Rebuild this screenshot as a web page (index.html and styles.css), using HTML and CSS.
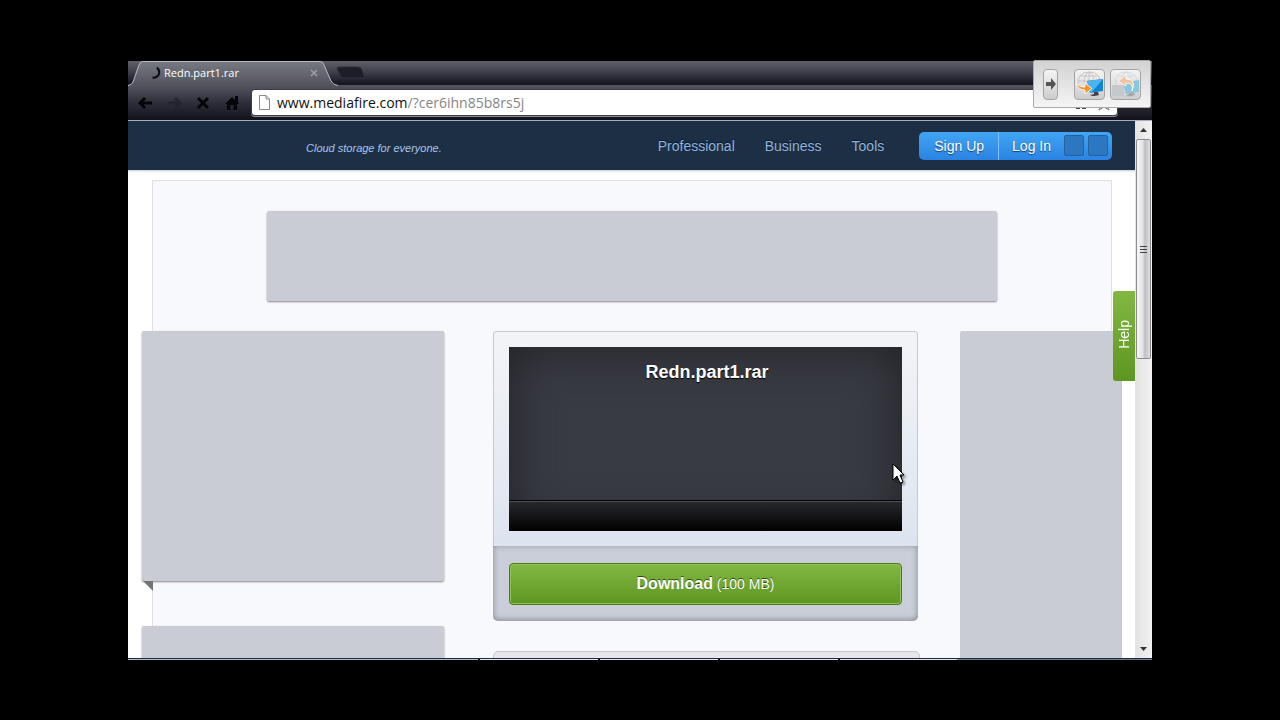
FILE: index.html
```html
<!DOCTYPE html>
<html lang="en">
<head>
<meta charset="utf-8">
<title>Redn.part1.rar</title>
<link rel="stylesheet" href="styles.css">
</head>
<body>
<div class="window">
  <div class="tab-strip">
    <div class="tab">
      <svg class="tab-shape" viewBox="0 0 212 25" aria-hidden="true">
        <defs><linearGradient id="tabFill" x1="0" y1="0" x2="0" y2="1"><stop offset="0" stop-color="#777982"/><stop offset="1" stop-color="#51525c"/></linearGradient></defs>
        <path d="M0 25 Q4 24 5 21 L11 4 Q12 1 15 1 H192 Q195 1 196 4 L203 20 Q205 24 210 25Z" fill="url(#tabFill)"/>
        <path d="M0 24.500 Q4 24 5 21 L11 4 Q12 .5 15 .5 H192 Q195 .5 196 4 L203 20 Q205 24 210 24.500" fill="none" stroke="#b9bac1"/>
      </svg>
      <svg class="spinner" viewBox="0 0 9 12" aria-hidden="true"><path d="M5 .5Q8.500 4 6.500 8Q4.500 11 .5 10.800" fill="none" stroke="#0a0a10" stroke-width="2"/></svg>
      <span class="tab-title">Redn.part1.rar</span>
      <button class="tab-close" aria-label="Close tab"><svg viewBox="0 0 8 8"><path d="M1 1L7 7M7 1L1 7" stroke="#a3a4aa" stroke-width="1.300"/></svg></button>
    </div>
    <button class="new-tab" aria-label="New tab"><svg viewBox="0 0 30 14"><path d="M3 1H22Q25 1 26 4L29 12H8Q5 12 4 9L1 3Q1 1 3 1Z" fill="#1c1d27" stroke="#30313b"/></svg></button>
  </div>
  <div class="toolbar">
    <button class="tool" aria-label="Back"><svg viewBox="0 0 16 14"><path d="M7 2L2 7L7 12M2 7H14" fill="none" stroke="#06060a" stroke-width="3"/></svg></button>
    <button class="tool" aria-label="Forward"><svg viewBox="0 0 16 14"><path d="M8 2L13 7L8 12M13 7H1" fill="none" stroke="#22232d" stroke-width="3"/></svg></button>
    <button class="tool" aria-label="Stop"><svg viewBox="0 0 16 14"><path d="M2 2L12 12M12 2L2 12" stroke="#06060a" stroke-width="3"/></svg></button>
    <button class="tool" aria-label="Home"><svg viewBox="0 0 16 14"><path d="M0 8L7 1L10 4V0H13V7L14 8H12V14H8.500V9H5.500V14H2V8Z" fill="#06060a"/></svg></button>
    <div class="address">
      <svg class="page-icon" viewBox="0 0 11 15" aria-hidden="true"><path d="M.5.5H7L10.500 4V14.500H.5ZM7 .5V4H10.500" fill="#fff" stroke="#888"/></svg>
      <label class="host" for="path">www.mediafire.com</label><input class="path" id="path" type="text" value="/?cer6ihn85b8rs5j">
      <svg class="page-actions" viewBox="0 0 40 18" aria-hidden="true"><path d="M2 11H6M8 11H12" stroke="#444" stroke-width="2"/><path d="M30 1L32 5L36 6L33 9L35 13L30 10L25 13L27 9L24 6L28 5Z" fill="#fff" stroke="#777"/></svg>
    </div>
    <button class="menu" aria-label="Menu"><svg viewBox="0 0 14 12"><path d="M1 2H13M1 6H13M1 10H13" stroke="#05050a" stroke-width="2"/></svg></button>
  </div>

  <div class="viewport">
    <div class="page">
      <header class="site-header">
        <p class="tagline">Cloud storage for everyone.</p>
        <nav class="site-nav">
          <a href="#">Professional</a><a href="#">Business</a><a href="#">Tools</a>
        </nav>
        <div class="account">
          <a class="sign-up" href="#">Sign Up</a>
          <a class="log-in" href="#">Log In</a>
          <span class="social"></span><span class="social"></span>
        </div>
      </header>
      <main class="sheet">
        <div class="banner"></div>
        <div class="columns">
          <aside class="left">
            <div class="box ad"><svg class="fold" viewBox="0 0 10 10" aria-hidden="true"><path d="M0 0H10V10Z" fill="#717376"/></svg></div>
            <div class="box ad"></div>
          </aside>
          <section class="center">
            <div class="card">
              <div class="preview">
                <h1 class="file-name">Redn.part1.rar</h1>
                <div class="preview-bar"></div>
                <svg class="cursor" viewBox="0 0 14 22" aria-hidden="true"><path d="M1 1V17L5 13L8 20L11 19L8 12H12Z" fill="#fff" stroke="#000"/></svg>
              </div>
            </div>
            <div class="download-box">
              <button class="download"><strong>Download</strong> (100 MB)</button>
            </div>
            <div class="share"></div>
          </section>
          <aside class="right"></aside>
        </div>
      </main>
      <button class="help"><span>Help</span></button>
    </div>
    <div class="scrollbar" aria-hidden="true">
      <svg class="arrow" viewBox="0 0 17 18"><path d="M5 11L8.500 7L12 11Z" fill="#333"/></svg>
      <div class="thumb"><i></i><i></i><i></i></div>
      <svg class="arrow down" viewBox="0 0 17 18"><path d="M5 7L8.500 11L12 7Z" fill="#333"/></svg>
    </div>
  </div>
  <div class="taskbar"><i></i><i></i><i></i><i></i><i></i></div>

  <div class="widget">
    <button class="widget-arrow" aria-label="Collapse"><svg viewBox="0 0 10 12"><path d="M0 4H5V0L10 6L5 12V8H0Z" fill="#555"/></svg></button>
    <button class="widget-button" aria-label="Send to screen"><svg viewBox="0 0 28 28">
      <g fill="none" stroke="#c2c2c2" stroke-width=".9"><path d="M2 14Q2 2 13 2Q23 2 24 11M8 14Q8 4 13 2Q18 4 18 11M13 2V15M2 11H24M5 6H21"/></g>
      <path d="M11 11L27 9V21L14 23Z" fill="#0d84d4"/><path d="M11 11L27 9L16 22L14 23Z" fill="#49b4ee"/><path d="M18 22L22 22L23 25Q17 27 14 25L18 24Z" fill="#444"/>
      <path d="M0 13Q4 18 9 17V13L16 18.500L9 24V20Q2 20 0 13Z" fill="#f39325" stroke="#fff" stroke-width=".8"/></svg></button>
    <button class="widget-button" aria-label="Return from screen"><svg viewBox="0 0 28 28">
      <g fill="none" stroke="#d6d6d6" stroke-width=".9"><path d="M3 14Q3 2 14 2Q24 2 25 11M9 14Q9 4 14 2Q19 4 19 11M3 11H25M6 6H22"/></g>
      <path d="M0 15H12V26H0Z" fill="#c6c9cb"/>
      <path d="M11 13L27 10V22L14 24Z" fill="#8bc4df"/><path d="M18 23L22 23L23 25Q18 27 14 26Z" fill="#a5a5a5"/>
      <path d="M20 21Q22 13 14 13V16L6 11L14 5V9Q25 9 20 21Z" fill="#f0c5a0" stroke="#fff" stroke-width=".8"/></svg></button>
  </div>
</div>
</body>
</html>
```
FILE: styles.css
```css
* { box-sizing: border-box; }

body {
  margin: 0;
  height: 100vh;
  padding: 61px 10% 60px;
  background: #000;
  font-family: "Liberation Sans", Arial, sans-serif;
  font-size: 14px;
}

button { border: 0; padding: 0; background: none; font: inherit; cursor: pointer; }
a { text-decoration: none; }
svg { display: block; }

.window {
  position: relative;
  display: flex;
  flex-direction: column;
  height: 100%;
}

/* Browser chrome */
.tab-strip {
  display: flex;
  height: 24px;
  background: linear-gradient(#5f6069, #3b3c47 50%, #11121d);
}
.tab {
  position: relative;
  z-index: 1;
  display: flex;
  align-items: center;
  width: 208px;
  padding: 0 18px 1px 24px;
  font-family: "Open Sans", "Noto Sans", sans-serif;
  font-size: 11px;
  color: #fff;
}
.tab-shape { position: absolute; top: 0; left: 0; width: 212px; height: 25px; }
.spinner, .tab-title, .tab-close { position: relative; }
.spinner { width: 9px; height: 12px; }
.tab-title { flex: 1; margin-left: 3px; }
.tab-close svg { width: 8px; height: 8px; }
.new-tab svg { width: 30px; height: 14px; }

.toolbar {
  display: flex;
  align-items: center;
  height: 36px;
  padding: 0 10px;
  background: linear-gradient(#54555f, #2e2f3a 50%, #11121b);
  border-bottom: 1px solid #a9adb8;
}
.tool { width: 29px; padding-right: 13px; }
.tool svg { width: 16px; height: 14px; }
.address {
  flex: 1;
  display: flex;
  align-items: center;
  height: 25px;
  margin-left: -2px;
  padding: 0 3px 0 7px;
  border-radius: 3px;
  background: #fff;
  box-shadow: 0 0 0 1px #3b3c46, 0 1px 0 1px #8b8c94;
  font-family: "Open Sans", "Noto Sans", sans-serif;
  font-size: 14px;
}
.page-icon { width: 11px; height: 15px; margin-right: 7px; }
.host { color: #111; }
.path {
  flex: 1;
  min-width: 0;
  border: 0;
  padding: 0;
  outline: 0;
  background: none;
  font: inherit;
  color: #858585;
}
.page-actions { align-self: flex-end; width: 40px; height: 18px; }
.menu { width: 25px; padding-left: 11px; }
.menu svg { width: 14px; height: 12px; }

/* Page area */
.viewport { flex: 1; min-height: 0; display: flex; background: #fff; }
.page { position: relative; flex: 1; min-width: 0; overflow: hidden; }

.site-header {
  display: flex;
  align-items: center;
  height: 49px;
  padding: 0 23px 0 178px;
  background: #1c2f45;
  box-shadow: 0 1px 2px #c5c7d5;
}
.tagline {
  margin: 0;
  padding-top: 5px;
  font-size: 11px;
  font-style: italic;
  color: #abc5e9;
}
.site-nav { display: flex; gap: 30px; margin: 0 35px 0 auto; }
.site-nav a { color: #91b3df; text-shadow: 0 -1px 0 #0b1726; }
.account {
  display: flex;
  align-items: center;
  gap: 4px;
  height: 28px;
  padding-right: 4px;
  border-radius: 5px;
  background: linear-gradient(#42a5f3, #2a83e2);
}
.account a {
  line-height: 28px;
  color: #fff;
  text-shadow: 0 1px 1px #123e70;
}
.sign-up { padding: 0 14px 0 15px; border-right: 1px solid #80c0f5; }
.log-in { padding: 0 9px; }
.social {
  width: 20px;
  height: 21px;
  border: 1px solid #2261a2;
  border-radius: 2px;
  background: #2c77c0;
}

.sheet {
  height: 900px;
  margin: 10px 23px 0 24px;
  padding-top: 30px;
  border: 1px solid #dfe0e5;
  background: #f8f9fd;
}
.banner {
  width: 730px;
  max-width: 100%;
  height: 90px;
  margin: 0 auto 30px;
  border-radius: 2px;
  background: #c9ccd5;
  box-shadow: 0 1px 2px #85878e;
}
.columns {
  display: grid;
  grid-template-columns: 302px 1fr 162px;
  margin: 0 -11px;
}
.left { display: grid; align-content: start; gap: 45px; }
.box {
  position: relative;
  height: 250px;
  border-radius: 2px;
  background: #c9ccd5;
  box-shadow: 0 1px 2px #85878e;
}
.fold { position: absolute; top: 100%; left: 1px; width: 10px; height: 10px; }
.right { background: #c9ccd5; height: 600px; border-radius: 2px; }
.center { padding: 0 42px 0 49px; }

.card {
  padding: 15px;
  border: 1px solid #c2c8d6;
  border-bottom: 0;
  border-radius: 4px 4px 0 0;
  background: linear-gradient(#f3f4f8, #dde4ef);
}
.preview {
  position: relative;
  display: flex;
  flex-direction: column;
  justify-content: space-between;
  height: 184px;
  background: #393b43;
  box-shadow: inset 0 0 50px #202126;
}
.file-name {
  margin: 0;
  padding: 15px 0 0 3px;
  font-size: 18px;
  line-height: 21px;
  text-align: center;
  color: #fff;
  text-shadow: 0 1px 1px #000;
}
.preview-bar {
  height: 31px;
  border-top: 1px solid #000;
  background: linear-gradient(#292a2e, #000);
  box-shadow: inset 0 1px 0 #4c4e55;
}
.cursor {
  position: absolute;
  right: -4px;
  bottom: 46px;
  width: 14px;
  height: 22px;
  filter: drop-shadow(2px 2px 1px #0006);
}
.download-box {
  padding: 17px 16px 16px;
  border-radius: 0 0 5px 5px;
  background: #c9ced8;
  box-shadow: inset 0 -1px 6px #85878e;
}
.download {
  display: block;
  width: 100%;
  height: 42px;
  border: 1px solid #4a7b1d;
  border-radius: 4px;
  background: linear-gradient(#82b842, #5e9622);
  box-shadow: inset 0 0 0 1px #8fc255;
  color: #fff;
  text-shadow: 0 -1px 0 #2c4d0d;
}
.download strong { font-size: 16px; }
.share {
  height: 60px;
  margin: 30px -2px 0 0;
  border: 1px solid #c8c9d0;
  border-radius: 5px;
  background: #e6e6ec;
}

.help {
  position: absolute;
  top: 170px;
  right: 0;
  width: 22px;
  height: 90px;
  border-radius: 3px 0 0 3px;
  background: linear-gradient(#82b842, #5e9622);
  color: #fff;
}
.help span { writing-mode: vertical-rl; rotate: 180deg; line-height: 22px; }

/* Scrollbar */
.scrollbar {
  display: flex;
  flex-direction: column;
  width: 17px;
  background: linear-gradient(90deg, #e3e3e4, #f1f1f2);
}
.arrow { width: 17px; height: 18px; }
.arrow.down { margin-top: auto; }
.thumb {
  display: flex;
  flex-direction: column;
  align-items: center;
  justify-content: center;
  gap: 2px;
  height: 41%;
  margin: 0 1px;
  border: 1px solid #8c8c8f;
  border-radius: 2px;
  background: linear-gradient(90deg, #f7f7f8, #e2e2e4 45%, #bfc0c4 60%, #dedee0);
}
.thumb i { width: 7px; height: 1px; background: #444; }

.taskbar {
  display: grid;
  grid-template-columns: 350px 118px 118px 118px 1fr;
  gap: 2px;
  height: 2px;
  border-top: 1px solid #1a2b3f;
  background: #000;
}
.taskbar i { background: #e6e9f0; }
.taskbar i:first-child { background: #aebfd0; }
.taskbar i:last-child { background: linear-gradient(90deg, #e6e9f0 116px, #6f7f90 118px); }

/* Floating transfer widget */
.widget {
  position: absolute;
  top: -1px;
  right: 1px;
  display: flex;
  align-items: center;
  height: 48px;
  padding: 0 9px;
  border: 1px solid #aaa;
  border-radius: 2px;
  background: linear-gradient(#d2d2d2, #f5f5f5);
}
.widget-arrow, .widget-button {
  display: grid;
  place-items: center;
  height: 31px;
  border: 1px solid #a5a5a5;
  border-radius: 4px;
  background: linear-gradient(#f4f4f4, #cdcdcd);
}
.widget-arrow { width: 15px; margin-right: 16px; }
.widget-arrow svg { width: 10px; height: 12px; }
.widget-button { width: 31px; }
.widget-button + .widget-button { margin-left: 5px; }
.widget-button svg { width: 28px; height: 28px; }
```
